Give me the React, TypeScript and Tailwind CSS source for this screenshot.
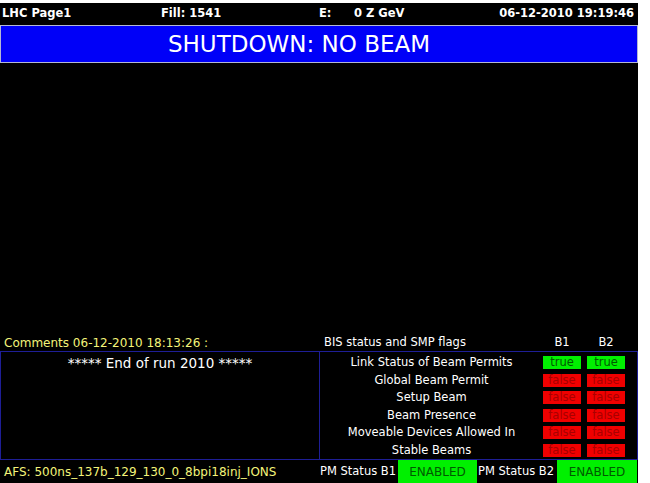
const rows = [
  { label: 'Link Status of Beam Permits', b1: true, b2: true },
  { label: 'Global Beam Permit', b1: false, b2: false },
  { label: 'Setup Beam', b1: false, b2: false },
  { label: 'Beam Presence', b1: false, b2: false },
  { label: 'Moveable Devices Allowed In', b1: false, b2: false },
  { label: 'Stable Beams', b1: false, b2: false },
];

function Flag({ value }: { value: boolean }) {
  return value ? (
    <div className="h-[13px] w-[38px] bg-[#00f000] text-[#005a00] flex items-center justify-center leading-none">true</div>
  ) : (
    <div className="h-[13px] w-[38px] bg-[#f00000] text-[#a80000] flex items-center justify-center leading-none">false</div>
  );
}

export default function App() {
  return (
    <div
      className="w-[650px] h-[483px] bg-white pt-[3px] overflow-hidden"
      style={{ fontFamily: '"DejaVu Sans", Verdana, sans-serif' }}
    >
      <div className="w-[638px] h-[480px] bg-black flex flex-col text-white">
        {/* top header */}
        <div className="h-[22px] flex items-center font-bold text-[11.5px] shrink-0">
          <div className="w-[161px] pl-[2px]">LHC Page1</div>
          <div className="w-[158px]">Fill: 1541</div>
          <div className="w-[35px]">E:</div>
          <div className="flex-1">0 Z GeV</div>
          <div className="pr-[4px]">06-12-2010 19:19:46</div>
        </div>

        <div className="h-[38px] shrink-0 border border-[#b4b8d4] bg-[#0000f8] flex items-center justify-center pr-[40px] text-[23px]">
          SHUTDOWN: NO BEAM
        </div>

        <div className="flex-1" />

        {/* headings */}
        <div className="h-[16px] shrink-0 flex items-center text-[11.5px]">
          <div className="w-[320px] pl-[4px] text-[#f4f47a] text-[12px]">Comments 06-12-2010 18:13:26 :</div>
          <div className="w-[223px] pl-[4px]">BIS status and SMP flags</div>
          <div className="w-[38px] text-center">B1</div>
          <div className="w-[6px]" />
          <div className="w-[38px] text-center">B2</div>
        </div>

        {/* boxes */}
        <div className="h-[109px] shrink-0 flex">
          <div className="w-[320px] border border-[#1e1e96] text-center text-[13.5px] pt-[3px] leading-[16px]">
            ***** End of run 2010 *****
          </div>
          <div className="flex-1 border border-l-0 border-[#1e1e96] flex flex-col pt-[2px] text-[11.5px]">
            {rows.map((r) => (
              <div key={r.label} className="h-[17.6px] flex items-center">
                <div className="w-[223px] text-center">{r.label}</div>
                <Flag value={r.b1} />
                <div className="w-[6px]" />
                <Flag value={r.b2} />
              </div>
            ))}
          </div>
        </div>

        {/* bottom bar */}
        <div className="h-[23px] shrink-0 flex items-stretch text-[12px]">
          <div className="w-[320px] pl-[4px] text-[#f4f47a] flex items-center">AFS: 500ns_137b_129_130_0_8bpi18inj_IONS</div>
          <div className="w-[78px] flex items-center text-[11.5px]">PM Status B1</div>
          <div className="w-[79px] bg-[#00f000] text-[#005a00] flex items-center justify-center">ENABLED</div>
          <div className="w-[80px] flex items-center pl-[1px] text-[11.5px]">PM Status B2</div>
          <div className="w-[80px] bg-[#00f000] text-[#005a00] flex items-center justify-center">ENABLED</div>
        </div>
      </div>
    </div>
  );
}
